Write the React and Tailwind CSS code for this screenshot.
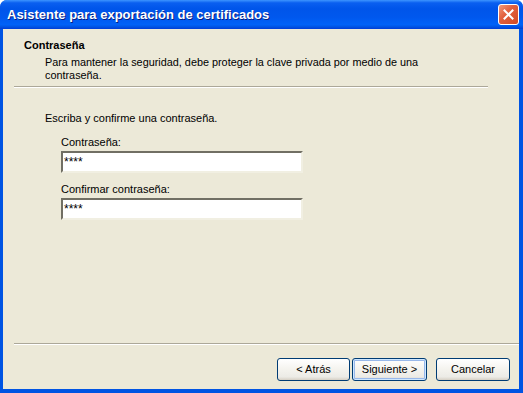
import React from "react";

function XPButton({ children, isDefault, className = "" }) {
  return (
    <button
      className={
        "h-[23px] rounded-[3px] border border-[#003C74] bg-[linear-gradient(180deg,#FFFFFF_0%,#F4F3EE_50%,#ECEBE6_85%,#D6D0C5_100%)] text-[11px] text-black leading-none flex items-center justify-center " +
        (isDefault ? "shadow-[inset_0_0_0_1px_#CEE7FF,inset_0_0_0_2px_#98B8EA] " : "") +
        className
      }
      style={{ fontFamily: '"Liberation Sans", Arial, sans-serif' }}
    >
      {children}
    </button>
  );
}

function XPInput() {
  return (
    <div className="w-[242px] h-[22px] border-2 border-t-[#716F64] border-l-[#716F64] border-b-[#F1EFE2] border-r-[#F1EFE2] bg-white flex items-center pl-[1px]">
      <span className="text-[12px] leading-none text-black">****</span>
    </div>
  );
}

export default function App() {
  return (
    <div
      className="w-[523px] h-[393px] flex flex-col bg-[#0054E3] rounded-t-[7px] overflow-hidden"
      style={{ fontFamily: '"Liberation Sans", Arial, sans-serif' }}
    >
      {/* Title bar */}
      <div className="h-[29px] shrink-0 flex items-center justify-between pl-[7px] pr-[4px] bg-[linear-gradient(180deg,#3D95FF_0%,#0A5FF0_10%,#0055EA_30%,#0058EE_60%,#0062F8_85%,#0055E5_92%,#003DD7_100%)]">
        <span className="text-white font-bold text-[13px] tracking-[0px] [text-shadow:1px_1px_0_#0A1E80]">
          Asistente para exportación de certificados
        </span>
        <div className="w-[21px] h-[21px] rounded-[3px] border border-white bg-[linear-gradient(135deg,#F29A7B_0%,#E2613F_40%,#D24A25_100%)] flex items-center justify-center">
          <svg width="11" height="11" viewBox="0 0 11 11">
            <path d="M1.5 1.5 L9.5 9.5 M9.5 1.5 L1.5 9.5" stroke="white" strokeWidth="2" strokeLinecap="square" />
          </svg>
        </div>
      </div>

      {/* Body */}
      <div className="flex-1 ml-[3px] mr-[4px] mb-[4px] bg-[#ECE9D8] flex flex-col text-[11px] text-black">
        {/* Header */}
        <div className="pt-[10px] pl-[21px]">
          <div className="font-bold leading-[13px]">Contraseña</div>
          <div className="pl-[21px] pt-[4px] leading-[13px] w-[420px] text-[10.85px]">
            Para mantener la seguridad, debe proteger la clave privada por medio de una contraseña.
          </div>
        </div>
        <div className="mt-[4px] ml-[11px] w-[474px] h-[2px] border-t border-t-[#ACA899] border-b border-b-white" />

        {/* Content */}
        <div className="pl-[42px] pt-[24px]">
          <div className="leading-[13px]">Escriba y confirme una contraseña.</div>
          <div className="pl-[16px] pt-[11px] flex flex-col">
            <div className="leading-[13px]">Contraseña:</div>
            <div className="mt-[2px]">
              <XPInput />
            </div>
            <div className="leading-[13px] mt-[10px]">Confirmar contraseña:</div>
            <div className="mt-[2px]">
              <XPInput />
            </div>
          </div>
        </div>

        <div className="flex-1" />
        <div className="ml-[11px] w-[505px] h-[2px] border-t border-t-[#ACA899] border-b border-b-white" />
        <div className="flex justify-end pr-[9px] pt-[13px] pb-[8px]">
          <XPButton className="w-[73px]">&lt; Atrás</XPButton>
          <XPButton isDefault className="w-[75px] ml-[2px]">Siguiente &gt;</XPButton>
          <XPButton className="w-[74px] ml-[9px]">Cancelar</XPButton>
        </div>
      </div>
    </div>
  );
}
